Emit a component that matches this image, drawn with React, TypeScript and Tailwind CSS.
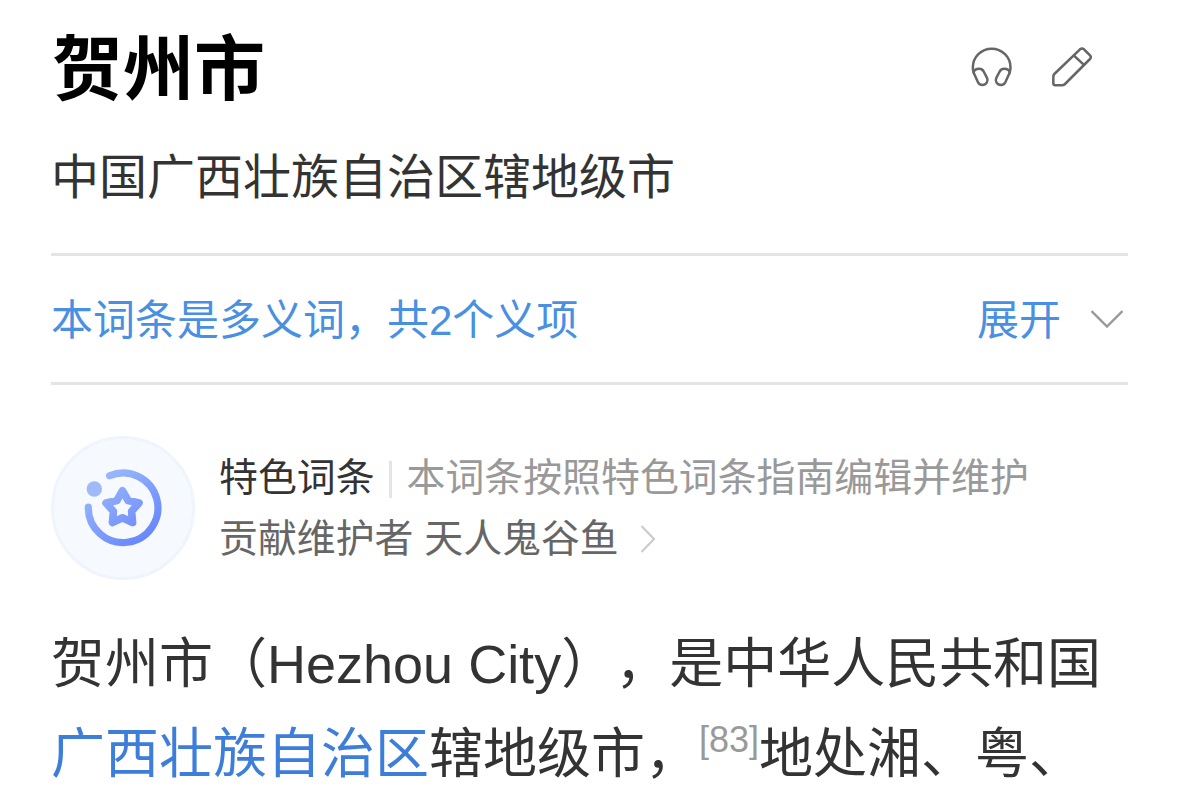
function HeadphonesIcon() {
  return (
    <svg viewBox="0 0 132 132" className="size-11" fill="none" stroke="#666666" strokeWidth="7.500" strokeLinecap="round" strokeLinejoin="round">
      <path d="M11 80C9 74 8.500 68 8.500 64.500a56.500 56.500 0 0 1 113 0c0 3.500-.5 9.500-2.500 15.500" />
      <path d="M11 80C12 72 20 68.500 28 68.500c6 0 10 3 13 8l10 19c5 10-2 21.500-14 21.500-6 0-10-3-13-8Z" />
      <path d="M119 80c-1-8-9-11.500-17-11.500-6 0-10 3-13 8L79 95.500c-5 10 2 21.500 14 21.500 6 0 10-3 13-8Z" />
    </svg>
  );
}

function PencilIcon() {
  return (
    <svg viewBox="0 0 132 132" className="size-11" fill="none" stroke="#666666" strokeWidth="7.500" strokeLinecap="round" strokeLinejoin="round">
      <path d="M13 84 90 10q6-5 12 0l18 18q5 5 0 11l-75 75q-4 4-9 4H16q-6 0-6-6V92q0-5 3-8Z" />
      <path d="m72 29 29 27" />
    </svg>
  );
}

function FeaturedBadge() {
  return (
    <div className="size-36 shrink-0 rounded-full border-[3px] border-[#eff4fd] bg-[#f6faff]">
      <svg viewBox="3 3 138 138" className="size-full" fill="none">
        <defs>
          <linearGradient id="badge" gradientUnits="userSpaceOnUse" x1="45" y1="38" x2="98" y2="106">
            <stop offset="0" stopColor="#9dbcfa" />
            <stop offset="1" stopColor="#6684fb" />
          </linearGradient>
        </defs>
        <path d="M58.500 39.700A34.800 34.800 0 1 1 37.300 71.200" stroke="url(#badge)" strokeWidth="7.200" strokeLinecap="round" />
        <circle cx="43.300" cy="53" r="7.700" fill="#9fbaf9" />
        <path
          d="M71.500 54.700 77.100 64.500 88 67 80.600 75.300 81.600 86.500 71.500 81.800 61.400 86.500 62.400 75.300 55 67 65.900 64.500Z"
          stroke="url(#badge)"
          strokeWidth="7.600"
          strokeLinejoin="round"
        />
      </svg>
    </div>
  );
}

export default function App() {
  return (
    <main
      lang="zh-CN"
      className="h-[799px] w-[1179px] overflow-hidden bg-white pl-[51px] pr-[51px] font-['Liberation_Sans','Noto_Sans_CJK_SC',sans-serif] whitespace-nowrap text-[#333333] [text-spacing-trim:space-all]"
    >
      <header className="flex h-[253px] flex-col pt-[18px]">
        <div className="flex h-[100px] items-center justify-between">
          <h1 className="pt-1 pl-px text-[71px] leading-[100px] font-bold text-black">贺州市</h1>
          <div className="flex items-center gap-9 pr-[34px]">
            <HeadphonesIcon />
            <PencilIcon />
          </div>
        </div>
        <p className="mt-[27px] text-[48px] leading-[66px]">中国广西壮族自治区辖地级市</p>
      </header>

      <section className="flex h-[132px] items-center justify-between border-y-[3px] border-[#e4e4e4] text-[42px] text-[#4a90e2]">
        <span className="pt-0.5">本词条是多义词，共2个义项</span>
        <span className="flex items-center gap-[30px] pr-[5px]">
          <span className="pt-0.5">展开</span>
          <svg viewBox="0 0 32 18" className="h-[18px] w-8" fill="none" stroke="#999999" strokeWidth="2.400">
            <path d="m.5 1 15.500 15.500L31.500 1" />
          </svg>
        </span>
      </section>

      <section className="mt-[51px] flex h-36 items-center gap-6 text-[38.900px]">
        <FeaturedBadge />
        <div className="flex flex-col pt-px">
          <div className="flex h-[61px] items-center">
            <span>特色词条</span>
            <span className="mt-0.5 mr-[15px] ml-[14px] h-[37px] w-[3px] bg-[#e4e4e4]" />
            <span className="text-[#999999]">本词条按照特色词条指南编辑并维护</span>
          </div>
          <div className="flex h-[61px] items-center text-[#666666]">
            <span>贡献维护者 天人鬼谷鱼</span>
            <svg viewBox="0 0 16 28" className="ml-[21px] h-7 w-4" fill="none" stroke="#cccccc" strokeWidth="2.200">
              <path d="m1.500 1 12.500 13-12.500 13" />
            </svg>
          </div>
        </div>
      </section>

      <article className="mt-[39px] text-[54px] leading-[90px]">
        <p>贺州市（Hezhou City），是中华人民共和国</p>
        <p>
          <a className="text-[#3d7edb]">广西壮族自治区</a>辖地级市，
          <sup className="top-[-21px] align-baseline text-[36px] leading-none text-[#999999]">[83]</sup>
          地处湘、粤、
        </p>
      </article>
    </main>
  );
}
